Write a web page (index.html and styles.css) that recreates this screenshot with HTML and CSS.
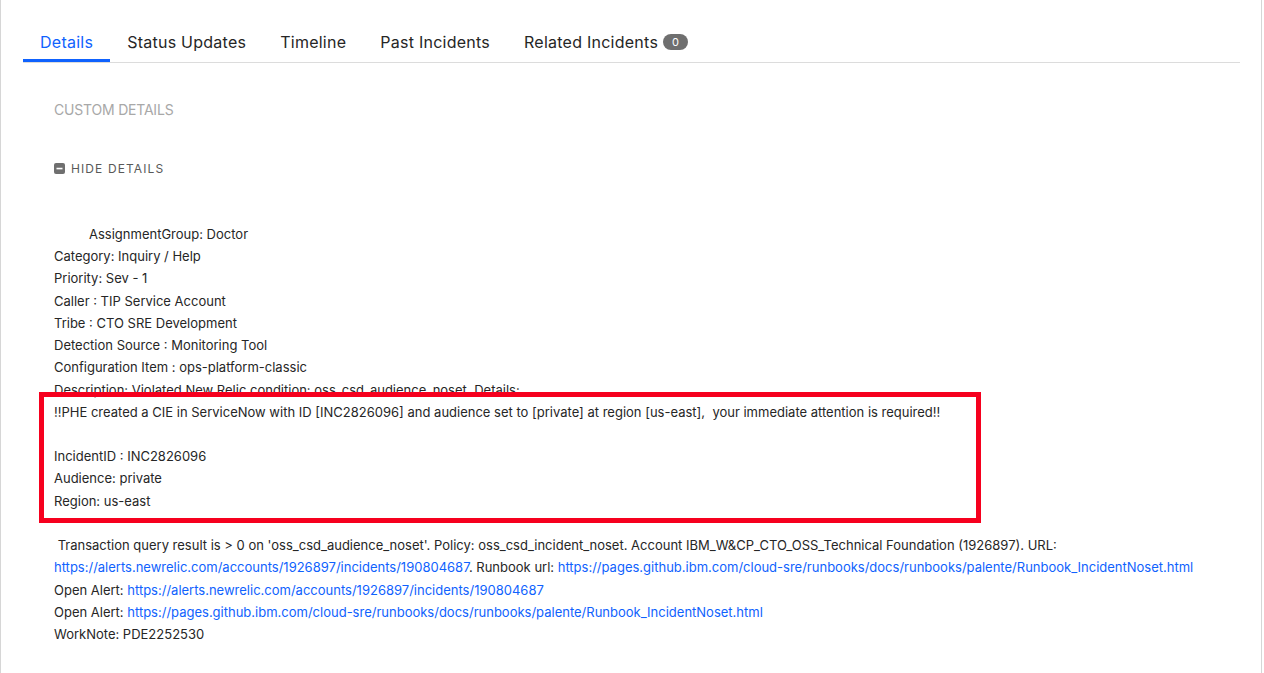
FILE: index.html
```html
<!DOCTYPE html>
<html lang="en">
<head>
<meta charset="utf-8">
<title>Incident Details</title>
<link rel="stylesheet" href="styles.css">
</head>
<body>
<div class="panel">
  <nav class="tabs">
    <a class="tab active">Details</a>
    <a class="tab">Status Updates</a>
    <a class="tab">Timeline</a>
    <a class="tab">Past Incidents</a>
    <a class="tab">Related Incidents <span class="badge">0</span></a>
  </nav>
  <section class="content">
    <h3 class="section-title">CUSTOM DETAILS</h3>
    <div class="toggle">
      <svg class="toggle-icon" width="11" height="11" viewBox="0 0 11 11" aria-hidden="true">
        <rect x="0" y="0" width="11" height="11" rx="2" fill="#6f6f6f"/>
        <rect x="2.5" y="4.75" width="6" height="1.6" fill="#fff"/>
      </svg>
      <span>HIDE DETAILS</span>
    </div>
    <div class="lines">
      <div class="line indent">AssignmentGroup: Doctor</div>
      <div class="line">Category: Inquiry / Help</div>
      <div class="line">Priority: Sev - 1</div>
      <div class="line">Caller : TIP Service Account</div>
      <div class="line">Tribe : CTO SRE Development</div>
      <div class="line">Detection Source : Monitoring Tool</div>
      <div class="line">Configuration Item : ops-platform-classic</div>
      <div class="line">Description: Violated New Relic condition: oss_csd_audience_noset. Details:</div>
      <div class="line">!!PHE created a CIE in ServiceNow with ID [INC2826096] and audience set to [private] at region [us-east],&nbsp; your immediate attention is required!!</div>
      <div class="line">&nbsp;</div>
      <div class="line">IncidentID : INC2826096</div>
      <div class="line">Audience: private</div>
      <div class="line">Region: us-east</div>
      <div class="line">&nbsp;</div>
      <div class="line">&nbsp;Transaction query result is &gt; 0 on 'oss_csd_audience_noset'. Policy: oss_csd_incident_noset. Account IBM_W&amp;CP_CTO_OSS_Technical Foundation (1926897). URL:</div>
      <div class="line"><a class="link">https://alerts.newrelic.com/accounts/1926897/incidents/190804687</a>. Runbook url: <a class="link">https://pages.github.ibm.com/cloud-sre/runbooks/docs/runbooks/palente/Runbook_IncidentNoset.html</a></div>
      <div class="line">Open Alert: <a class="link">https://alerts.newrelic.com/accounts/1926897/incidents/190804687</a></div>
      <div class="line">Open Alert: <a class="link">https://pages.github.ibm.com/cloud-sre/runbooks/docs/runbooks/palente/Runbook_IncidentNoset.html</a></div>
      <div class="line">WorkNote: PDE2252530</div>
      <div class="highlight" aria-hidden="true"></div>
    </div>
  </section>
</div>
</body>
</html>
```

FILE: styles.css
```css
* { box-sizing: border-box; }

html, body {
  margin: 0;
  padding: 0;
  background: #ffffff;
}

body {
  font-family: "Inter", "Liberation Sans", sans-serif;
  color: #262626;
  width: 1264px;
  height: 673px;
  overflow: hidden;
}

.panel {
  width: 1262px;
  min-height: 673px;
  border-left: 1px solid #d6d6d6;
  border-right: 1px solid #d6d6d6;
  padding: 0 21px 0 22px;
}

.tabs {
  display: flex;
  padding-top: 22px;
  border-bottom: 1px solid #dcdcdc;
}

.tab {
  display: flex;
  align-items: center;
  gap: 5px;
  padding: 8px 17px 5px;
  line-height: 24px;
  font-size: 16px;
  letter-spacing: 0.25px;
  color: #262626;
  border-bottom: 3px solid transparent;
  white-space: nowrap;
}

.tab.active {
  color: #0f62fe;
  border-bottom-color: #0f62fe;
}

.badge {
  display: inline-flex;
  align-items: center;
  justify-content: center;
  width: 25px;
  height: 16px;
  border-radius: 8px;
  background: #6f6f6f;
  color: #ffffff;
  font-size: 11px;
  letter-spacing: 0;
  line-height: 16px;
}

.content {
  padding-left: 31px;
}

.section-title {
  margin: 37px 0 0;
  font-size: 14px;
  font-weight: 400;
  letter-spacing: -0.2px;
  line-height: 20px;
  color: #a8a8a8;
}

.toggle {
  display: flex;
  align-items: center;
  gap: 6px;
  margin-top: 38px;
  height: 20px;
  font-size: 12px;
  letter-spacing: 1.1px;
  color: #595959;
}

.toggle-icon {
  flex: none;
}

.lines {
  position: relative;
  margin-top: 45px;
  font-size: 13px;
  line-height: 22.22px;
  color: #262626;
}

.line {
  white-space: nowrap;
}

.line.indent {
  padding-left: 35px;
}

.link {
  color: #0f62fe;
  text-decoration: none;
}

.highlight {
  position: absolute;
  left: -15px;
  top: 169px;
  width: 942px;
  height: 131px;
  border: 5px solid #f6001e;
}
```
